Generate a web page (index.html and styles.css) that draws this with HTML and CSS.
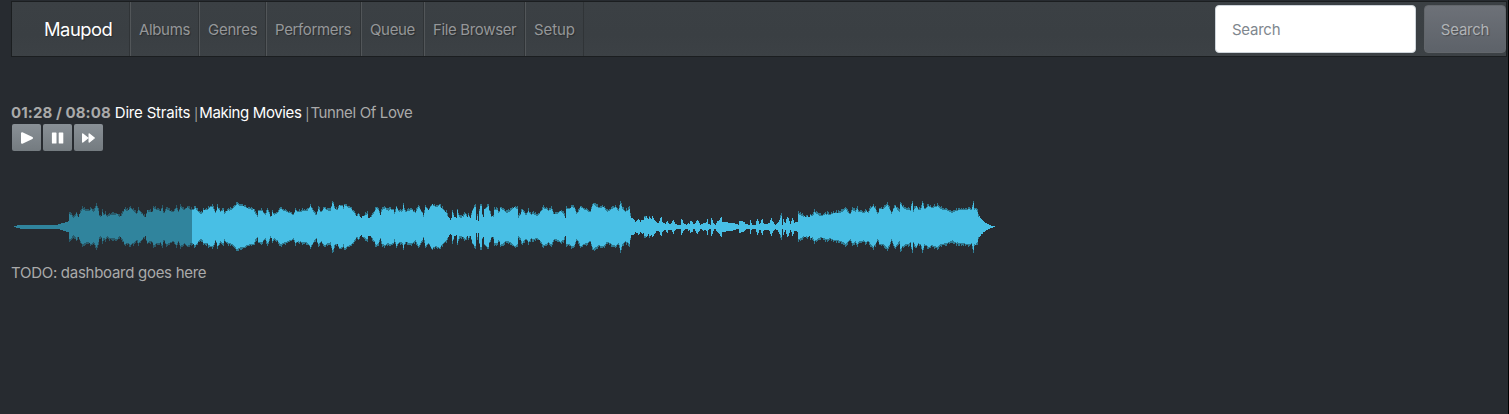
FILE: index.html
```html
<!DOCTYPE html>
<html lang="en">
<head>
<meta charset="utf-8">
<title>Maupod</title>
<link rel="stylesheet" href="styles.css">
</head>
<body>
<div class="page">
  <nav class="navbar">
    <a class="brand">Maupod</a>
    <ul class="nav">
      <li class="item albums"><span>Albums</span></li>
      <li class="item genres"><span>Genres</span></li>
      <li class="item performers"><span>Performers</span></li>
      <li class="item queue"><span>Queue</span></li>
      <li class="item files"><span>File Browser</span></li>
      <li class="item setup"><span>Setup</span></li>
    </ul>
    <form class="search">
      <input class="field" type="text" placeholder="Search">
      <button class="submit" type="button">Search</button>
    </form>
  </nav>
  <main class="content">
    <div class="track"><b class="time">01:28 / 08:08</b> <a class="artist">Dire Straits</a> <span class="bar">|</span><a class="album">Making Movies</a> <span class="bar">|</span><span class="title">Tunnel Of Love</span></div>
    <div class="controls">
      <button class="control" aria-label="Play"><svg width="29" height="27" viewBox="0 0 29 27"><path d="M10 9.200v9.600L20 14z" fill="#fff" stroke="#fff" stroke-width="2" stroke-linejoin="round"/></svg></button>
      <button class="control" aria-label="Pause"><svg width="29" height="27" viewBox="0 0 29 27"><path d="M9.500 8.500h3.400q.6 0 .6.600v9.800q0 .6-.6.600H9.500q-.6 0-.6-.6V9.100q0-.6.6-.6zM16.300 8.500h3.400q.6 0 .6.600v9.800q0 .6-.6.600h-3.400q-.6 0-.6-.6V9.100q0-.6.6-.6z" fill="#fff"/></svg></button>
      <button class="control" aria-label="Next"><svg width="29" height="27" viewBox="0 0 29 27"><path d="M8.700 10v8l5-4zM15.200 10v8l5-4z" fill="#fff" stroke="#fff" stroke-width="1.400" stroke-linejoin="round"/></svg></button>
    </div>
    <svg class="wave" width="985" height="60" viewBox="11 197 985 60" shape-rendering="crispEdges">
      <path class="played peak" id="played-peak"/>
      <path class="played body" id="played-body"/>
      <path class="rest peak" id="rest-peak"/>
      <path class="rest body" id="rest-body"/>
    </svg>
    <div class="todo">TODO: dashboard goes here</div>
  </main>
</div>
<script src="wave.js"></script>
</body>
</html>
```
FILE: wave.js
```js
// Each segment: start offset, then "position:amplitude" pairs at three units per pixel.
const segments = [
  [0, "42:.5 48:1 60:2 170:2 180:3 190:4 205:5.5 208:14 213:13 218:9 225:12 228:15 233:10 238:14 245:19 250:18 258:17 265:17 272:19 280:16 288:22 294:17 298:10 303:12 305:16 310:12 315:14 320:11 330:13 340:13 350:14 358:10 365:13 372:19 380:17 390:20 400:17 410:14 415:18 425:14 435:10 440:18 445:16 455:16 460:20 470:18 480:17 485:20 490:14 497:19 510:17 520:16 527:20 535:16 540:21 550:18 562:21 570:18 576:18 585:20 592:17 600:14 605:14 610:18 620:18 630:21 637:21 645:15 652:21 660:16 668:18 672:14 678:17 690:18 700:20 710:24 720:22 730:22 740:20 749:19"],
  [250, "0:18 8:19 15:14 22:11 25:17 35:17 45:13 52:18 57:14 62:9 65:16 72:13 80:15 90:19 97:18 110:16 120:15 130:13 135:18 145:16 160:17 170:17 180:22 190:16 197:12 203:19 212:16 222:20 230:18 240:17 247:26 252:20 260:18 268:23 275:22 280:18 283:23 292:21 300:20 310:16 320:11 325:14 332:8 340:12 350:14 355:9 365:12 372:16 377:20 382:19 390:13 395:18 405:20 412:17 420:19 430:18 433:12 437:21 445:17 455:16 460:23 463:16 470:17 485:18 495:15 505:21 515:15 520:11 525:21 535:18 545:24 548:22 560:21 568:23 572:20 580:18 588:15 595:9 600:7 605:9 607:16 612:10 620:8 622:18 625:11 635:10 645:14 650:10 655:13 660:9 665:17 672:21 675:21 677:5 681:12 684:6 686:16 690:22 694:22 697:9 701:10 703:19 713:22 718:16 725:10 728:8 731:18 740:18 745:14 749:19"],
  [500, "0:20 8:18 20:15 30:17 42:21 50:19 53:10 60:13 65:18 72:15 77:13 85:17 92:13 100:14 110:12 120:16 130:20 137:19 145:17 152:19 160:14 170:14 180:17 190:14 195:9 198:19 205:19 215:21 222:20 228:14 235:16 240:21 255:18 270:16 278:24 285:22 295:20 310:21 320:16 330:18 345:21 355:17 361:25 365:19 375:16 388:19 391:9 400:8 405:5 415:8 420:5 425:7 430:6 433:11 440:9 445:7 448:11 452:7 456:11 462:7 470:4 475:4 482:10 485:5 495:3 500:6 505:3 512:3 518:7 525:3 530:2 540:2 544:8 550:3 560:2 563:4 567:3 570:6 576:5 580:2 585:4 590:7 597:4 600:2 610:4 617:3 620:8 623:3 630:2 634:9 640:3 645:2 650:5 655:6 662:10 666:5 675:5 685:4 695:4 705:3 715:2 718:6 730:5 735:3 745:2 749:2"],
  [750, "0:7 4:2 15:2 20:8 24:6 28:2 35:8 40:3 50:3 57:4 62:9 67:5 75:2 85:5 92:12 96:2 100:8 104:2 110:10 114:9 120:3 127:9 132:4 143:5 145:14 155:12 165:10 170:12 175:9 180:13 187:12 192:16 200:14 210:12 220:13 230:14 240:13 250:15 265:15 280:17 285:19 292:16 300:14 307:18 315:16 320:19 325:16 332:16 340:15 348:17 355:15 360:19 368:22 375:19 382:13 388:19 400:19 410:23 418:19 423:14 430:19 435:22 442:18 448:15 451:24 456:21 465:19 475:18 480:17 485:25 488:16 497:22 505:18 512:19 517:25 522:19 535:22 545:20 560:22 570:19 585:18 595:17 605:15 615:17 630:18 640:18 655:19 665:18 668:26 672:19 680:18 685:11 695:7 705:4 715:2 725:1 735:.5"]
];
const knots = segments.flatMap(([start, text]) =>
  text.split(" ").map(pair => {
    const [x, amp] = pair.split(":").map(Number);
    return [start + x / 3, amp];
  })
);
const centre = 226.7;
const split = 192;
const paths = { "played-peak": "", "played-body": "", "rest-peak": "", "rest-body": "" };
let k = 0;
for (let x = 14; x < 995; x++) {
  // The tallest value inside the pixel column keeps narrow peaks visible.
  while (k < knots.length - 2 && knots[k + 1][0] < x) k++;
  const [x0, a0] = knots[k];
  const [x1, a1] = knots[k + 1];
  const t = Math.max(0, Math.min(1, (x - x0) / (x1 - x0)));
  let amp = a0 + (a1 - a0) * t;
  for (let n = k; n <= k + 1; n++) {
    if (Math.abs(knots[n][0] - x) <= 0.5) amp = Math.max(amp, knots[n][1]);
  }
  const noise = Math.abs(Math.sin(x * 12.9898) * 43758.5453) % 1;
  if (amp > 9 && x < 974) amp += (noise - 0.4) * 3;
  amp = Math.min(amp, 26);
  const inner = amp > 11 ? amp - 0.6 - noise * 2.4 : amp;
  const side = x < split ? "played" : "rest";
  for (const [kind, h] of [["peak", amp], ["body", inner]]) {
    const top = Math.round(centre - h);
    const bottom = Math.max(top + 1, Math.round(centre + h));
    paths[side + "-" + kind] += `M${x} ${top}h1V${bottom}h-1z`;
  }
}
for (const id in paths) document.getElementById(id).setAttribute("d", paths[id]);
```
FILE: styles.css
```css
* { box-sizing: border-box; }
body {
  margin: 0;
  background: #272b30;
  color: #aaa;
  font: 15px/23px Inter, "Liberation Sans", sans-serif;
  letter-spacing: -.28px;
}
.page {
  height: 414px;
  padding: 1px 1px 0 11px;
  border-right: 1px solid #000;
  overflow: hidden;
}
.navbar {
  display: flex;
  height: 56px;
  border: 1px solid #1b1e20;
  background: linear-gradient(#3b4044, #3a3f43 60%, #3c4145);
  text-shadow: 1px 1px 1px rgba(0, 0, 0, .3);
}
.brand {
  width: 118px;
  padding-left: 32px;
  color: #fff;
  font-size: 18.4px;
  line-height: 54px;
  letter-spacing: -.5px;
}
.nav { display: flex; margin: 0; padding: 0; list-style: none; }
.item {
  padding-left: 8px;
  border-left: 1px solid #525659;
  box-shadow: inset -1px 0 #303437, -1px 0 #303437;
  color: #959799;
  line-height: 56px;
  letter-spacing: -.35px;
  white-space: nowrap;
}
.albums { width: 69px; }
.genres { width: 67px; letter-spacing: -.25px; }
.performers { width: 95px; }
.queue { width: 63px; }
.files { width: 101px; }
.setup { width: 59px; letter-spacing: -.1px; }
.search { display: flex; gap: 8px; margin: 3px 0 3px auto; }
.field, .submit {
  height: 48px;
  border-radius: 4px;
  font: inherit;
  letter-spacing: -.25px;
}
.field {
  width: 201px;
  padding: 1px 16px 0;
  border: 1px solid #ced4da;
  background: #fff;
  color: #495057;
}
.field::placeholder { color: #7f878e; opacity: 1; }
.submit {
  width: 82px;
  padding: 1px 0 0;
  border: 1px solid #62666b;
  background: linear-gradient(#6d7178, #5d6269);
  color: #b0b3b6;
  text-shadow: 1px 1px 1px rgba(0, 0, 0, .3);
}
.content { padding-top: 44px; }
.track { height: 23px; white-space: nowrap; }
.time { letter-spacing: .1px; }
.artist { color: #fff; letter-spacing: -.18px; }
.album { color: #fff; letter-spacing: -.38px; }
.title { letter-spacing: -.36px; }
.bar {
  display: inline-block;
  width: 4px;
  margin-left: 1px;
  font-family: "Open Sans", sans-serif;
  font-size: 14px;
  line-height: 1;
  text-indent: -3px;
}
.controls { display: flex; gap: 2px; height: 28px; padding-left: 1px; }
.control {
  width: 29px;
  height: 27px;
  padding: 0;
  border: 0;
  border-radius: 2px;
  background: linear-gradient(#899096, #747b80);
}
.control svg { display: block; }
.wave { display: block; margin-top: 45px; }
.played.peak { fill: #295b6b; }
.played.body { fill: #30849d; }
.rest.peak { fill: #2f7b92; }
.rest.body { fill: #48bfe5; }
.todo { margin-top: 4px; }
```
